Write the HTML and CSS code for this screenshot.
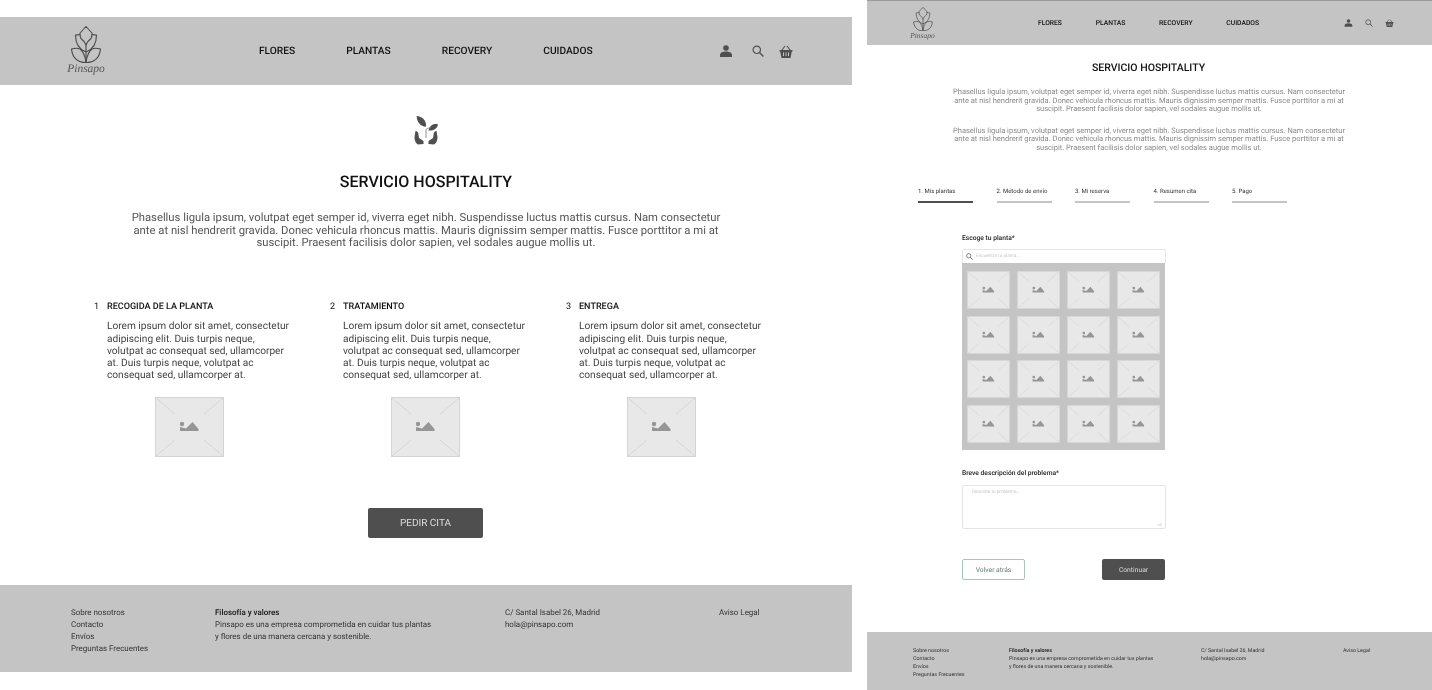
FILE: index.html
```html
<!DOCTYPE html>
<html lang="es">
<head>
<meta charset="utf-8">
<title>Servicio Hospitality</title>
<link rel="stylesheet" href="styles.css">
</head>
<body>
<svg class="defs" width="0" height="0" aria-hidden="true">
  <symbol id="logo" viewBox="0 0 30 37">
    <g fill="none" stroke="#4a4a4a" stroke-width="1.1" stroke-linejoin="round">
      <path d="M15 0.500 L21 7 C21 9 21 11 20 12.500 C18 14 16 16 15 19 C14 16 12 14 10 12.500 C9 11 9 9 9 7 Z"/>
      <path d="M9 8.500 C7 9 5.500 9 4.500 9 C4.500 16 7 23 15 26"/>
      <path d="M21 8.500 C23 9 24.500 9 25.500 9 C25.500 16 23 23 15 26"/>
      <path d="M0.500 23 C4 22 7 22 9 23 C12 25 14.500 31 15 36.500 C8 37 1.500 33 0.500 23 Z"/>
      <path d="M29.500 23 C26 22 23 22 21 23 C18 25 15.500 31 15 36.500 C22 37 28.500 33 29.500 23 Z"/>
      <path d="M15 19 V36.500"/>
    </g>
  </symbol>
  <symbol id="user" viewBox="0 0 14 12">
    <circle cx="7" cy="3" r="2.800" fill="#4f4f4f"/>
    <path d="M1 12 V10 C1 7.500 4 6.500 7 6.500 C10 6.500 13 7.500 13 10 V12 Z" fill="#4f4f4f"/>
  </symbol>
  <symbol id="search" viewBox="0 0 12 12">
    <circle cx="4.800" cy="4.800" r="3.700" fill="none" stroke="#4f4f4f" stroke-width="1.200"/>
    <path d="M7.500 7.500 L11.400 11.400" stroke="#4f4f4f" stroke-width="1.400"/>
  </symbol>
  <symbol id="basket" viewBox="0 0 14 13">
    <path d="M0.500 5 H13.500 V6.500 H12.800 L11.500 13 H2.500 L1.200 6.500 H0.500 Z" fill="#4f4f4f"/>
    <path d="M3 5 L6 1 M11 5 L8 1" stroke="#4f4f4f" stroke-width="1.100" fill="none"/>
    <path d="M4.500 7.500 V11 M7 7.500 V11 M9.500 7.500 V11" stroke="#c4c4c4" stroke-width="1"/>
  </symbol>
  <symbol id="sprout" viewBox="0 0 26 30">
    <g fill="#4f4f4f">
      <path d="M3.700 1 C9 1.500 13.500 5 13 11.700 C7.500 11.700 3.700 7 3.700 1 Z"/>
      <path d="M25 9.500 C20.500 8 16.500 10.500 15.500 15.500 C20 16 24 14 25 9.500 Z"/>
      <path d="M2.500 16 C4.500 16 5.500 18 5.500 20 L6 23 L10.500 26 V29 L5 29.500 C2.500 28 1.500 25.500 1.500 22 Z"/>
      <path d="M23.500 16 C21.500 16 20.500 18 20.500 20 L20 23 L15.500 26 V29 L21 29.500 C23.500 28 24.500 25.500 24.500 22 Z"/>
    </g>
    <path d="M13 23 V15 C13 13.500 14.500 13.500 18 12.500" fill="none" stroke="#777" stroke-width="0.800"/>
  </symbol>
  <symbol id="ph" viewBox="0 0 69 60" preserveAspectRatio="none">
    <rect x="0.500" y="0.500" width="68" height="59" fill="#e8e8e8" stroke="#d4d4d4"/>
    <path d="M1 1 L20 17 M68 1 L49 17 M1 59 L20 43 M68 59 L49 43" stroke="#d6d6d6" stroke-width="1"/>
    <circle cx="27" cy="27" r="2.200" fill="#969696"/>
    <path d="M25 34 V30 L31 31.500 L37.500 25 L43.500 32 V34 Z" fill="#969696"/>
  </symbol>
  <symbol id="grip" viewBox="0 0 6 4">
    <path d="M0 4 L6 0 M3 4 L6 2" stroke="#aaa" stroke-width="0.600"/>
  </symbol>
</svg>

<main class="canvas">
  <section class="frame frame-a">
    <header class="hdr hdr-a">
      <div class="brand brand-a">
        <svg class="mark-a"><use href="#logo"/></svg>
        <span class="brand-name">Pinsapo</span>
      </div>
      <nav class="nav nav-a">
        <a>FLORES</a><a>PLANTAS</a><a>RECOVERY</a><a>CUIDADOS</a>
      </nav>
      <div class="tools tools-a">
        <svg class="i-user-a"><use href="#user"/></svg>
        <svg class="i-search-a"><use href="#search"/></svg>
        <svg class="i-basket-a"><use href="#basket"/></svg>
      </div>
    </header>

    <div class="body-a">
      <svg class="sprout"><use href="#sprout"/></svg>
      <h1 class="title-a">SERVICIO HOSPITALITY</h1>
      <p class="lead-a">Phasellus ligula ipsum, volutpat eget semper id, viverra eget nibh. Suspendisse luctus mattis cursus. Nam consectetur ante at nisl hendrerit gravida. Donec vehicula rhoncus mattis. Mauris dignissim semper mattis. Fusce porttitor a mi at suscipit. Praesent facilisis dolor sapien, vel sodales augue mollis ut.</p>

      <div class="steps">
        <article class="step">
          <h2 class="step-h"><span class="num">1</span>RECOGIDA DE LA PLANTA</h2>
          <p class="step-t">Lorem ipsum dolor sit amet, consectetur adipiscing elit. Duis turpis neque, volutpat ac consequat sed, ullamcorper at. Duis turpis neque, volutpat ac consequat sed, ullamcorper at.</p>
          <svg class="ph-a"><use href="#ph"/></svg>
        </article>
        <article class="step">
          <h2 class="step-h"><span class="num">2</span>TRATAMIENTO</h2>
          <p class="step-t">Lorem ipsum dolor sit amet, consectetur adipiscing elit. Duis turpis neque, volutpat ac consequat sed, ullamcorper at. Duis turpis neque, volutpat ac consequat sed, ullamcorper at.</p>
          <svg class="ph-a"><use href="#ph"/></svg>
        </article>
        <article class="step">
          <h2 class="step-h"><span class="num">3</span>ENTREGA</h2>
          <p class="step-t">Lorem ipsum dolor sit amet, consectetur adipiscing elit. Duis turpis neque, volutpat ac consequat sed, ullamcorper at. Duis turpis neque, volutpat ac consequat sed, ullamcorper at.</p>
          <svg class="ph-a"><use href="#ph"/></svg>
        </article>
      </div>

      <button class="cta">PEDIR CITA</button>
    </div>

    <footer class="ftr ftr-a">
      <ul class="f1"><li>Sobre nosotros</li><li>Contacto</li><li>Envíos</li><li>Preguntas Frecuentes</li></ul>
      <div class="f2"><strong>Filosofía y valores</strong><br>Pinsapo es una empresa comprometida en cuidar tus plantas<br>y flores de una manera cercana y sostenible.</div>
      <div class="f3">C/ Santal Isabel 26, Madrid<br>hola@pinsapo.com</div>
      <div class="f4">Aviso Legal</div>
    </footer>
  </section>

  <section class="frame frame-b">
    <header class="hdr hdr-b">
      <div class="brand brand-b">
        <svg class="mark-b"><use href="#logo"/></svg>
        <span class="brand-name-b">Pinsapo</span>
      </div>
      <nav class="nav nav-b">
        <a>FLORES</a><a>PLANTAS</a><a>RECOVERY</a><a>CUIDADOS</a>
      </nav>
      <div class="tools tools-b">
        <svg class="i-user-b"><use href="#user"/></svg>
        <svg class="i-search-b"><use href="#search"/></svg>
        <svg class="i-basket-b"><use href="#basket"/></svg>
      </div>
    </header>

    <div class="body-b">
      <h1 class="title-b">SERVICIO HOSPITALITY</h1>
      <p class="lead-b">Phasellus ligula ipsum, volutpat eget semper id, viverra eget nibh. Suspendisse luctus mattis cursus. Nam consectetur ante at nisl hendrerit gravida. Donec vehicula rhoncus mattis. Mauris dignissim semper mattis. Fusce porttitor a mi at suscipit. Praesent facilisis dolor sapien, vel sodales augue mollis ut.</p>
      <p class="lead-b lead-b2">Phasellus ligula ipsum, volutpat eget semper id, viverra eget nibh. Suspendisse luctus mattis cursus. Nam consectetur ante at nisl hendrerit gravida. Donec vehicula rhoncus mattis. Mauris dignissim semper mattis. Fusce porttitor a mi at suscipit. Praesent facilisis dolor sapien, vel sodales augue mollis ut.</p>

      <ol class="tabs">
        <li class="tab on">1. Mis plantas</li>
        <li class="tab">2. Método de envío</li>
        <li class="tab">3. Mi reserva</li>
        <li class="tab">4. Resumen cita</li>
        <li class="tab">5. Pago</li>
      </ol>

      <form class="form">
        <div class="label">Escoge tu planta*</div>
        <div class="search"><svg class="search-i"><use href="#search"/></svg><span>Encuentra tu planta...</span></div>
        <div class="gallery">
          <svg class="ph-b"><use href="#ph"/></svg><svg class="ph-b"><use href="#ph"/></svg><svg class="ph-b"><use href="#ph"/></svg><svg class="ph-b"><use href="#ph"/></svg>
          <svg class="ph-b"><use href="#ph"/></svg><svg class="ph-b"><use href="#ph"/></svg><svg class="ph-b"><use href="#ph"/></svg><svg class="ph-b"><use href="#ph"/></svg>
          <svg class="ph-b"><use href="#ph"/></svg><svg class="ph-b"><use href="#ph"/></svg><svg class="ph-b"><use href="#ph"/></svg><svg class="ph-b"><use href="#ph"/></svg>
          <svg class="ph-b"><use href="#ph"/></svg><svg class="ph-b"><use href="#ph"/></svg><svg class="ph-b"><use href="#ph"/></svg><svg class="ph-b"><use href="#ph"/></svg>
        </div>
        <div class="label label2">Breve descripción del problema*</div>
        <div class="area"><span>Describe tu problema...</span><svg class="grip"><use href="#grip"/></svg></div>
        <div class="actions">
          <button type="button" class="btn back">Volver atrás</button>
          <button type="button" class="btn next">Continuar</button>
        </div>
      </form>
    </div>

    <footer class="ftr ftr-b">
      <ul class="f1"><li>Sobre nosotros</li><li>Contacto</li><li>Envíos</li><li>Preguntas Frecuentes</li></ul>
      <div class="f2"><strong>Filosofía y valores</strong><br>Pinsapo es una empresa comprometida en cuidar tus plantas<br>y flores de una manera cercana y sostenible.</div>
      <div class="f3">C/ Santal Isabel 26, Madrid<br>hola@pinsapo.com</div>
      <div class="f4">Aviso Legal</div>
    </footer>
  </section>
</main>
</body>
</html>
```

FILE: styles.css
```css
* { box-sizing: border-box; }
html, body { margin: 0; padding: 0; background: #fff; }
body { font-family: Roboto, "Liberation Sans", sans-serif; color: #222; width: 1432px; height: 690px; overflow: hidden; text-rendering: geometricPrecision; }
.defs { position: absolute; }
svg { display: block; flex: none; }
h1, h2, p, ul, ol { margin: 0; padding: 0; list-style: none; font-weight: 400; }
button { font-family: inherit; border: 0; padding: 0; text-rendering: geometricPrecision; }

.canvas { display: flex; gap: 15px; align-items: flex-start; will-change: transform; }
.frame { display: flex; flex-direction: column; }
.frame-a { width: 852px; height: 655px; margin-top: 17px; }
.frame-b { width: 565px; height: 690px; }

.hdr { display: flex; align-items: center; background: #c4c4c4; flex: none; }
.hdr-a { height: 68px; padding-left: 68px; }
.hdr-b { height: 45px; padding-left: 43px; border-top: 1px solid #9c9c9c; }
.brand { display: flex; flex-direction: column; align-items: center; }
.brand-a { width: 36px; }
.brand-b { width: 25px; }
.mark-a { width: 30px; height: 37px; margin-left: -1px; }
.mark-b { width: 20px; height: 24px; }
.brand-name { font: italic 11.500px/13px "Liberation Serif", serif; color: #555; }
.brand-name-b { font: italic 7.500px/9px "Liberation Serif", serif; color: #555; }

.nav { display: flex; font-weight: 500; color: #111; }
.nav-a { margin-left: 155px; gap: 51px; font-size: 10.200px; line-height: 12px; padding-top: 2px; }
.nav-b { margin-left: 103px; gap: 33.800px; font-size: 6.750px; line-height: 9px; }

.tools { display: flex; align-items: center; }
.tools-a { margin-left: 126px; }
.tools-b { margin-left: 85px; }
.i-user-a { width: 14px; height: 12px; margin-right: 19px; }
.i-search-a { width: 12px; height: 12px; margin-right: 15px; }
.i-basket-a { width: 14px; height: 13px; }
.i-user-b { width: 9px; height: 8px; margin-right: 12px; }
.i-search-b { width: 8px; height: 8px; margin-right: 12px; }
.i-basket-b { width: 9px; height: 8px; }

.body-a { flex: 1; display: flex; flex-direction: column; align-items: center; }
.sprout { width: 26px; height: 30px; margin-top: 30px; }
.title-a { font-size: 16px; line-height: 20px; font-weight: 500; color: #111; margin-top: 27px; }
.lead-a { width: 600px; margin-top: 20px; text-align: center; font-size: 11.270px; line-height: 12.600px; color: #555; }

.steps { align-self: flex-start; display: flex; gap: 36px; margin: 51.700px 0 0 94px; }
.step { width: 200px; display: flex; flex-direction: column; }
.step-h { font-size: 9.050px; line-height: 12px; font-weight: 500; color: #111; display: flex; }
.num { width: 13px; font-weight: 400; }
.step-t { margin: 8px 0 0 13px; width: 183px; font-size: 10.150px; line-height: 12.200px; color: #444; }
.ph-a { width: 69px; height: 60px; margin: 14.500px 0 0 61px; }

.cta { width: 115px; height: 30px; margin: 51.500px 0 0 -1px; background: #4f4f4f; color: #ddd; border-radius: 2px; font-size: 10px; }

.ftr { display: flex; background: #c4c4c4; color: #333; flex: none; }
.ftr-a { height: 87px; padding: 22px 0 0 71px; font-size: 7.950px; line-height: 12px; }
.ftr-b { height: 58px; padding: 14.500px 0 0 46px; font-size: 5.300px; line-height: 8px; }
.ftr strong { font-weight: 500; color: #111; }
.ftr-a .f1 { width: 144px; }
.ftr-a .f2 { width: 290px; }
.ftr-a .f3 { width: 214px; }
.ftr-b .f1 { width: 96px; }
.ftr-b .f2 { width: 192px; }
.ftr-b .f3 { width: 142px; }

.body-b { flex: 1; display: flex; flex-direction: column; }
.title-b { font-size: 10.530px; line-height: 14px; color: #111; font-weight: 500; text-align: center; margin: 16px 0 0 -2px; }
.lead-b { width: 400px; margin: 13px 0 0 82px; text-align: center; font-size: 7.500px; line-height: 8.500px; color: #8a8a8a; }
.lead-b2 { margin-top: 13px; }

.tabs { display: flex; gap: 23.500px; margin: 35px 0 0 51px; }
.tab { width: 55px; height: 16px; padding-top: 1px; font-size: 6px; line-height: 8px; color: #333; border-bottom: 2px solid #c4c4c4; white-space: nowrap; }
.tab.on { border-bottom-color: #4f4f4f; }

.form { width: 204px; margin: 31px 0 0 95px; display: flex; flex-direction: column; }
.label { font-size: 6.700px; line-height: 8px; font-weight: 500; color: #222; }
.label2 { margin-top: 19px; }
.search { height: 14px; margin-top: 7px; display: flex; align-items: center; gap: 3px; padding-left: 3px; border: 1px solid #e6e6e6; border-bottom: 0; border-radius: 2px 2px 0 0; font-size: 4.700px; color: #c8c8c8; }
.search-i { width: 7px; height: 7px; }
.gallery { width: 203px; height: 187px; background: #c4c4c4; display: grid; grid-template-columns: repeat(4, 43px); grid-auto-rows: 38px; column-gap: 7px; row-gap: 6.700px; padding: 8px 5px; }
.ph-b { width: 43px; height: 38px; }
.area { position: relative; height: 44px; margin-top: 8px; padding: 4px 9px; border: 1px solid #e4e4e4; border-radius: 2px; font-size: 4.700px; line-height: 6px; color: #c8c8c8; }
.grip { position: absolute; right: 3px; bottom: 2px; width: 5px; height: 3px; }
.actions { display: flex; justify-content: space-between; width: 203px; margin-top: 30px; }
.btn { width: 63px; height: 21px; border-radius: 2px; font-size: 6.750px; }
.back { background: #fff; border: 1px solid #a9c4b9; color: #5f7d70; }
.next { background: #4f4f4f; color: #ddd; }
```
